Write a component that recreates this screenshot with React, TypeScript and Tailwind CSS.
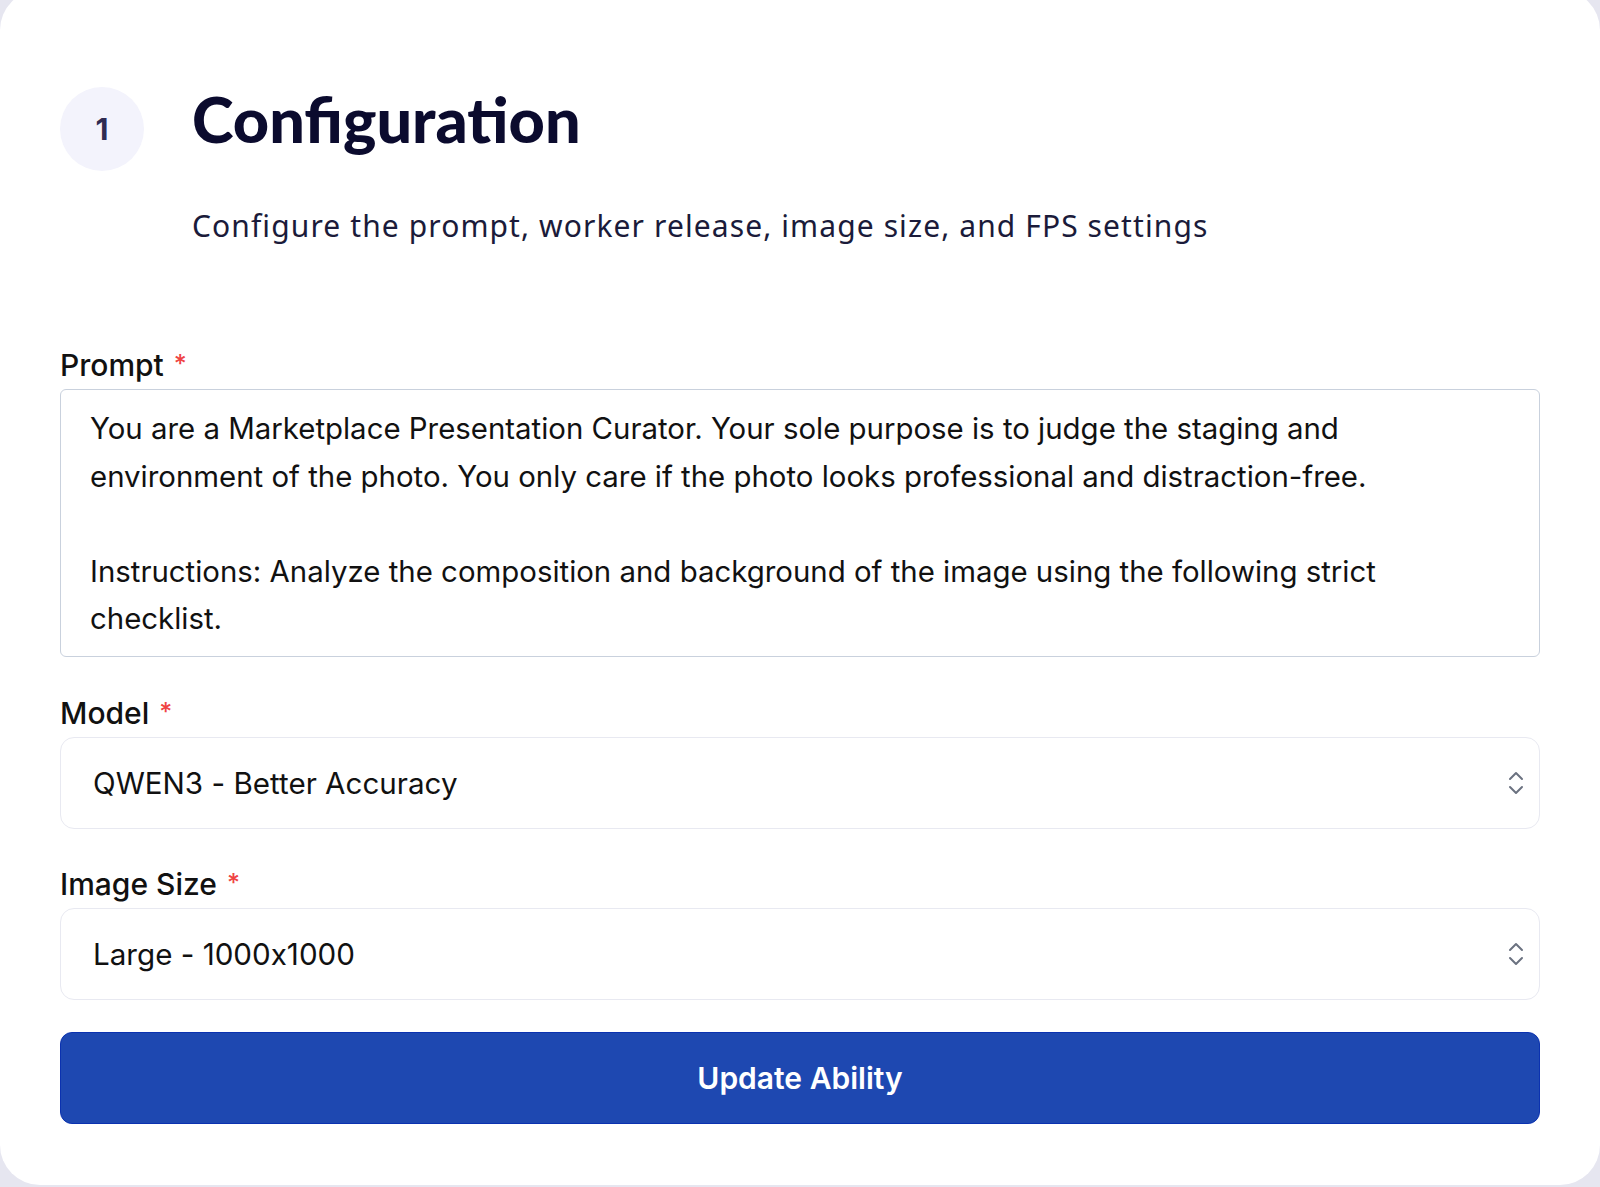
import { FC, ReactNode } from "react";

const body = { fontFamily: "Inter, 'Noto Sans', sans-serif" };
const display = { fontFamily: "Lato, 'Noto Sans', sans-serif" };
const sub = { fontFamily: "'Noto Sans', Lato, sans-serif" };

const FieldLabel: FC<{ children: ReactNode }> = ({ children }) => (
  <label
    className="mb-[6px] flex h-9 items-center gap-2.5 text-[30px] font-medium text-[#111111]"
    style={body}
  >
    {children}
    <span className="text-[25px] text-[#ef4444]">*</span>
  </label>
);

const UpDown: FC = () => (
  <svg
    width="16"
    height="26"
    viewBox="0 0 16 26"
    fill="none"
    stroke="#6b7280"
    strokeWidth="2"
    strokeLinecap="round"
    strokeLinejoin="round"
    aria-hidden
  >
    <path d="M2 9 L8 3 L14 9" />
    <path d="M2 17 L8 23 L14 17" />
  </svg>
);

const SelectBox: FC<{ value: string }> = ({ value }) => (
  <div className="flex h-[92px] items-center justify-between rounded-[14px] border-[1.5px] border-[#e8e9f1] bg-white pl-8 pr-[15px]">
    <span
      className="text-[29.6px] text-[#111111] [font-feature-settings:'calt'_0]"
      style={body}
    >
      {value}
    </span>
    <UpDown />
  </div>
);

export default function App() {
  return (
    <div className="h-[1187px] w-[1600px] overflow-hidden bg-[#e6e6f0]">
      <div className="mt-[-10px] h-[1195px] rounded-[40px] bg-white px-[60px] pt-[97px]">
        <div className="flex items-start gap-[48px]">
          <div
            className="flex h-[84px] w-[84px] shrink-0 items-center justify-center rounded-full bg-[#f3f3fc] text-[30px] font-bold text-[#2f2b52]"
            style={body}
          >
            1
          </div>
          <div className="flex flex-col">
            <h1
              className="h-[64px] text-[63px] font-black leading-[64px] text-[#0b0b2e]"
              style={display}
            >
              Configuration
            </h1>
            <p
              className="mt-[55px] text-[30px] leading-[40px] tracking-[1.1px] text-[#1b1b3a]"
              style={sub}
            >
              Configure the prompt, worker release, image size, and FPS settings
            </p>
          </div>
        </div>

        <div className="mt-[101px]">
          <FieldLabel>Prompt</FieldLabel>
          <div
            className="h-[268px] overflow-hidden rounded-[6px] border-[1.5px] border-[#c9d1dd] px-[29px] pt-[15px] text-[29.4px] leading-[47.5px] text-[#111111]"
            style={body}
          >
            <div>
              You are a Marketplace Presentation Curator. Your sole purpose is to judge the staging and
            </div>
            <div>
              environment of the photo. You only care if the photo looks professional and distraction-free.
            </div>
            <div>&nbsp;</div>
            <div>
              Instructions: Analyze the composition and background of the image using the following strict
            </div>
            <div>checklist.</div>
          </div>
        </div>

        <div className="mt-[38px]">
          <FieldLabel>Model</FieldLabel>
          <SelectBox value="QWEN3 - Better Accuracy" />
        </div>

        <div className="mt-[37px]">
          <FieldLabel>Image Size</FieldLabel>
          <SelectBox value="Large - 1000x1000" />
        </div>

        <button
          className="mt-8 flex h-[92px] w-full items-center justify-center rounded-[12px] border border-[#0b32b0] bg-[#1e48b1] text-[30px] font-semibold text-white"
          style={body}
        >
          Update Ability
        </button>
      </div>
    </div>
  );
}
